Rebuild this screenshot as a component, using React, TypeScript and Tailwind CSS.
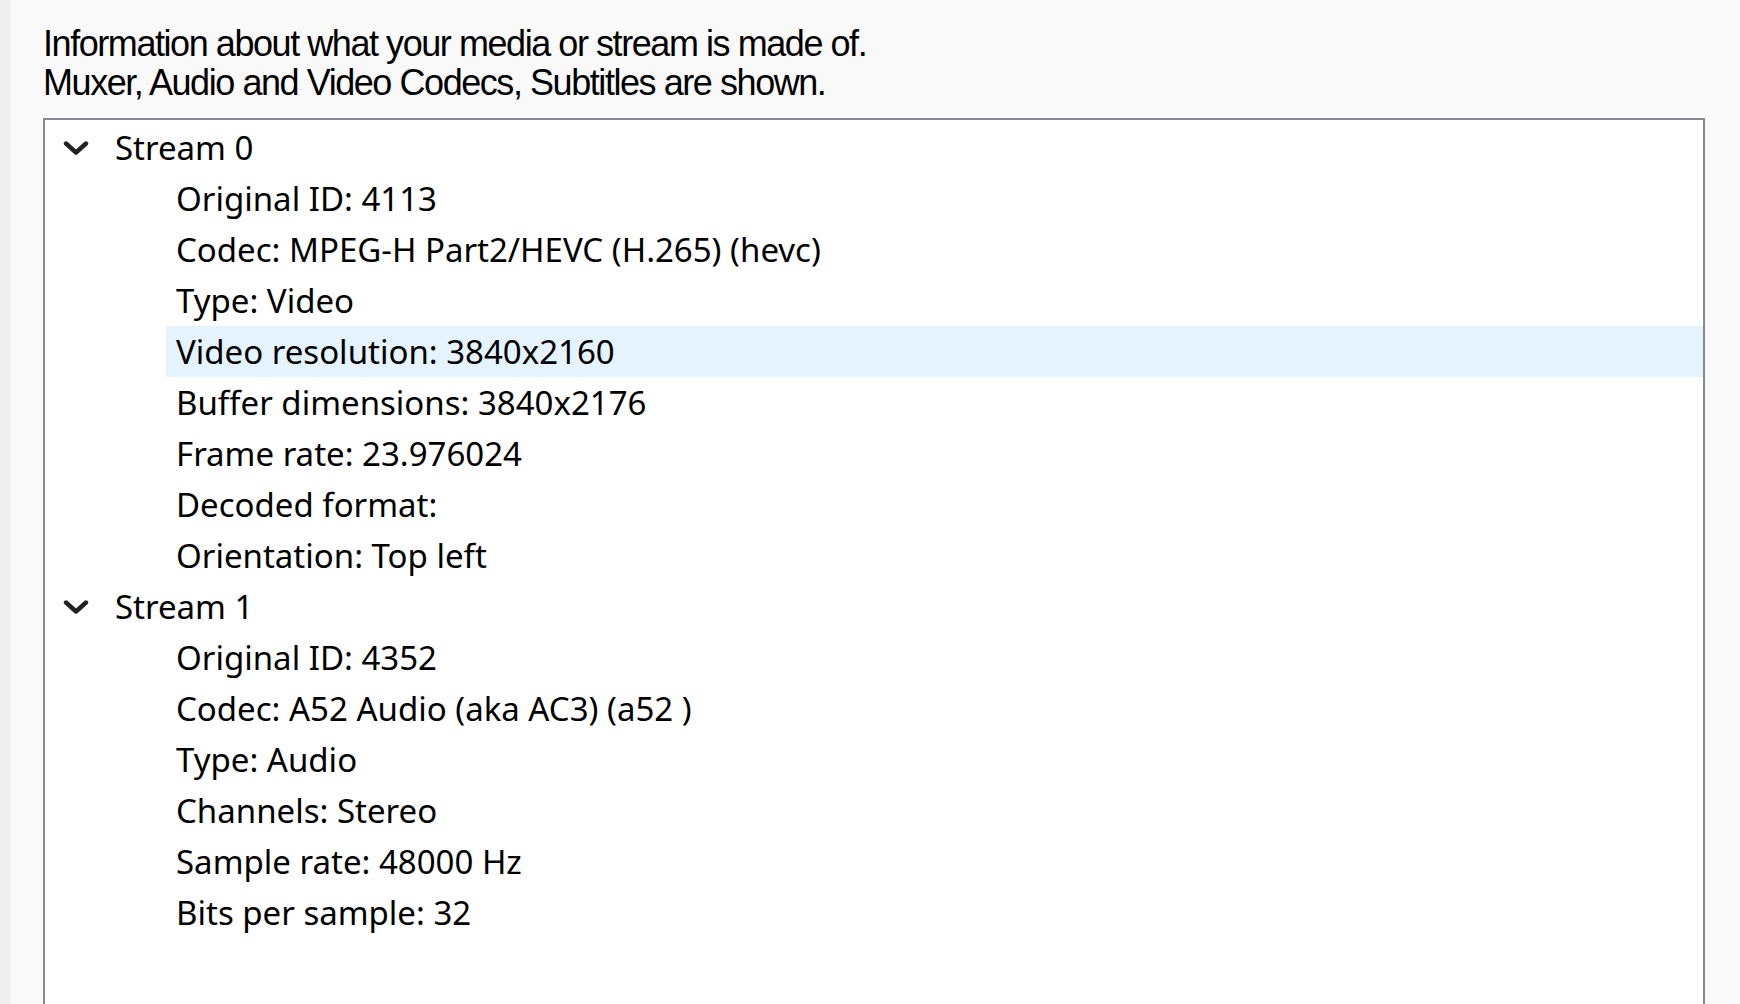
const streams = [
  {
    name: "Stream 0",
    items: [
      "Original ID: 4113",
      "Codec: MPEG-H Part2/HEVC (H.265) (hevc)",
      "Type: Video",
      "Video resolution: 3840x2160",
      "Buffer dimensions: 3840x2176",
      "Frame rate: 23.976024",
      "Decoded format:",
      "Orientation: Top left",
    ],
  },
  {
    name: "Stream 1",
    items: [
      "Original ID: 4352",
      "Codec: A52 Audio (aka AC3) (a52 )",
      "Type: Audio",
      "Channels: Stereo",
      "Sample rate: 48000 Hz",
      "Bits per sample: 32",
    ],
  },
];

function Chevron() {
  return (
    <svg width="26" height="16" viewBox="0 0 26 16" className="shrink-0">
      <path d="M3 3.5 L13 12.5 L23 3.5" fill="none" stroke="#222222" strokeWidth="4.4" strokeLinecap="round" strokeLinejoin="round" />
    </svg>
  );
}

export default function App() {
  const highlighted = "Video resolution: 3840x2160";

  return (
    <div className="flex h-[1004px] w-full overflow-hidden bg-[#f9f9f9]">
      <div className="w-[11px] shrink-0 border-r border-[#f4f4f4] bg-[#eeeeee]" />
      <div className="flex min-w-0 flex-1 flex-col pl-[32px] pr-[35px] pt-[24px]">
        <div
          className="text-[36px] leading-[39px] tracking-[-0.04em] text-black"
          style={{ fontFamily: '"Liberation Sans", Arial, sans-serif' }}
        >
          <p>Information about what your media or stream is made of.</p>
          <p>Muxer, Audio and Video Codecs, Subtitles are shown.</p>
        </div>

        <div
          className="mt-[16px] flex-1 border-2 border-b-0 border-[#868a94] bg-white pt-[2px] text-[33px] text-black"
          style={{ fontFamily: '"Noto Sans", "Open Sans", sans-serif' }}
        >
          {streams.map((stream) => (
            <div key={stream.name}>
              <div className="flex h-[51px] items-center">
                <div className="ml-[18px] mr-[26px] flex items-center">
                  <Chevron />
                </div>
                <span>{stream.name}</span>
              </div>
              {stream.items.map((item) => (
                <div
                  key={item}
                  className={
                    "ml-[121px] flex h-[51px] items-center pl-[10px] " +
                    (item === highlighted ? "bg-[#e5f3ff]" : "")
                  }
                >
                  <span>{item}</span>
                </div>
              ))}
            </div>
          ))}
        </div>
      </div>
    </div>
  );
}
